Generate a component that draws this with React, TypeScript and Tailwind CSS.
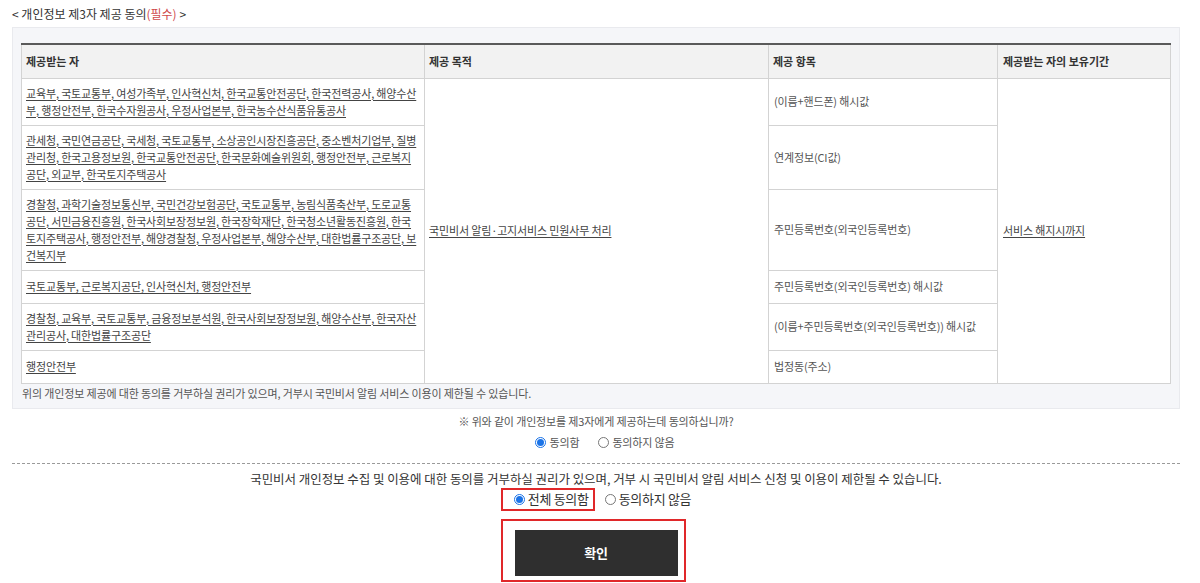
import React from 'react';

const font = { fontFamily: '"Noto Sans CJK KR", "Noto Sans", sans-serif' };

const rows = [
  {
    to: '교육부, 국토교통부, 여성가족부, 인사혁신처, 한국교통안전공단, 한국전력공사, 해양수산부, 행정안전부, 한국수자원공사, 우정사업본부, 한국농수산식품유통공사',
    item: '(이름+핸드폰) 해시값',
  },
  {
    to: '관세청, 국민연금공단, 국세청, 국토교통부, 소상공인시장진흥공단, 중소벤처기업부, 질병관리청, 한국고용정보원, 한국교통안전공단, 한국문화예술위원회, 행정안전부, 근로복지공단, 외교부, 한국토지주택공사',
    item: '연계정보(CI값)',
  },
  {
    to: '경찰청, 과학기술정보통신부, 국민건강보험공단, 국토교통부, 농림식품축산부, 도로교통공단, 서민금융진흥원, 한국사회보장정보원, 한국장학재단, 한국청소년활동진흥원, 한국토지주택공사, 행정안전부, 해양경찰청, 우정사업본부, 해양수산부, 대한법률구조공단, 보건복지부',
    item: '주민등록번호(외국인등록번호)',
  },
  {
    to: '국토교통부, 근로복지공단, 인사혁신처, 행정안전부',
    item: '주민등록번호(외국인등록번호) 해시값',
  },
  {
    to: '경찰청, 교육부, 국토교통부, 금융정보분석원, 한국사회보장정보원, 해양수산부, 한국자산관리공사, 대한법률구조공단',
    item: '(이름+주민등록번호(외국인등록번호)) 해시값',
  },
  { to: '행정안전부', item: '법정동(주소)' },
];

function Radio({ checked, label, big }: { checked?: boolean; label: string; big?: boolean }) {
  return (
    <label className="flex items-center gap-[3px]">
      <span
        className={
          checked
            ? 'flex h-[11px] w-[11px] items-center justify-center rounded-full border border-[#1a73e8] bg-white'
            : 'h-[11px] w-[11px] rounded-full border border-[#777]'
        }
      >
        {checked && <span className="h-[7px] w-[7px] rounded-full bg-[#1a73e8]" />}
      </span>
      <span className={big ? 'text-[13px] tracking-[-0.3px] text-[#333]' : 'text-[11px] text-[#555]'}>{label}</span>
    </label>
  );
}

export default function App() {
  const cell = 'border border-[#d3d3d3] px-[4px] py-[6px] align-middle leading-[17px]';
  return (
    <div className="w-full bg-white pl-[12px] pr-[20px] tracking-[-0.15px]" style={font}>
      {/* title */}
      <div className="flex h-[27px] items-center text-[12px] tracking-[0px] text-[#333]">
        &lt; 개인정보 제3자 제공 동의<span className="text-[#cf4a4a]">(필수)</span>&nbsp;&gt;
      </div>

      {/* table box */}
      <div className="border border-[#e9eaee] bg-[#f5f6f9] px-[8px] pt-[15px] pb-[6px]">
        <table className="w-full table-fixed border-collapse border-t-2 border-t-[#5a5a5a] bg-white text-[11px] text-[#444]">
          <colgroup>
            <col className="w-[403px]" />
            <col className="w-[344px]" />
            <col className="w-[229px]" />
            <col />
          </colgroup>
          <thead>
            <tr className="h-[34px] bg-[#f2f2f2] text-left font-bold tracking-[0px] text-[#333]">
              <th className={cell + ' px-[3px]'}>제공받는 자</th>
              <th className={cell + ' px-[3px]'}>제공 목적</th>
              <th className={cell}>제공 항목</th>
              <th className={cell + ' px-[5px]'}>제공받는 자의 보유기간</th>
            </tr>
          </thead>
          <tbody>
            {rows.map((r, i) => (
              <tr key={i} className="h-[33px]">
                <td className={cell + ' break-all px-[3px]'}>
                  <span className="underline underline-offset-2">{r.to}</span>
                </td>
                {i === 0 && (
                  <td rowSpan={6} className={cell + ' px-[3px]'}>
                    <span className="underline underline-offset-2">국민비서 알림·고지서비스 민원사무 처리</span>
                  </td>
                )}
                <td className={cell + ' px-[5px] text-[#555]'}>{r.item}</td>
                {i === 0 && (
                  <td rowSpan={6} className={cell + ' px-[5px]'}>
                    <span className="underline underline-offset-2">서비스 해지시까지</span>
                  </td>
                )}
              </tr>
            ))}
          </tbody>
        </table>
        <p className="mt-[1px] px-[1px] text-[11px] leading-[17px] text-[#555]">
          위의 개인정보 제공에 대한 동의를 거부하실 권리가 있으며, 거부시 국민비서 알림 서비스 이용이 제한될 수 있습니다.
        </p>
      </div>

      {/* 3rd party question */}
      <div className="flex flex-col items-center pt-[4px]">
        <p className="text-[11px] leading-[17px] text-[#555]">※ 위와 같이 개인정보를 제3자에게 제공하는데 동의하십니까?</p>
        <div className="mt-[4px] flex h-[18px] items-center gap-[19px] pl-[18px]">
          <Radio checked label="동의함" />
          <Radio label="동의하지 않음" />
        </div>
      </div>

      <div className="mt-[11px] border-t border-dashed border-[#9a9a9a]" />

      {/* overall */}
      <div className="flex flex-col items-center pt-[6px]">
        <p className="text-[12.5px] leading-[17px] tracking-[-0.05px] text-[#333]">
          국민비서 개인정보 수집 및 이용에 대한 동의를 거부하실 권리가 있으며, 거부 시 국민비서 알림 서비스 신청 및 이용이 제한될 수 있습니다.
        </p>
        <div className="mt-[1px] flex items-center gap-[10px]">
          <div className="flex h-[23px] items-center border-2 border-[#e0282a] pl-[11px] pr-[4px]">
            <Radio checked big label="전체 동의함" />
          </div>
          <Radio big label="동의하지 않음" />
        </div>
        <div className="mt-[8px] mr-[6px] border-2 border-[#e0282a] pt-[9px] pr-[6px] pb-[4px] pl-[12px]">
          <button className="flex h-[46px] w-[163px] items-center justify-center bg-[#2f2f2f] text-[13px] font-bold text-white">
            확인
          </button>
        </div>
      </div>
    </div>
  );
}
